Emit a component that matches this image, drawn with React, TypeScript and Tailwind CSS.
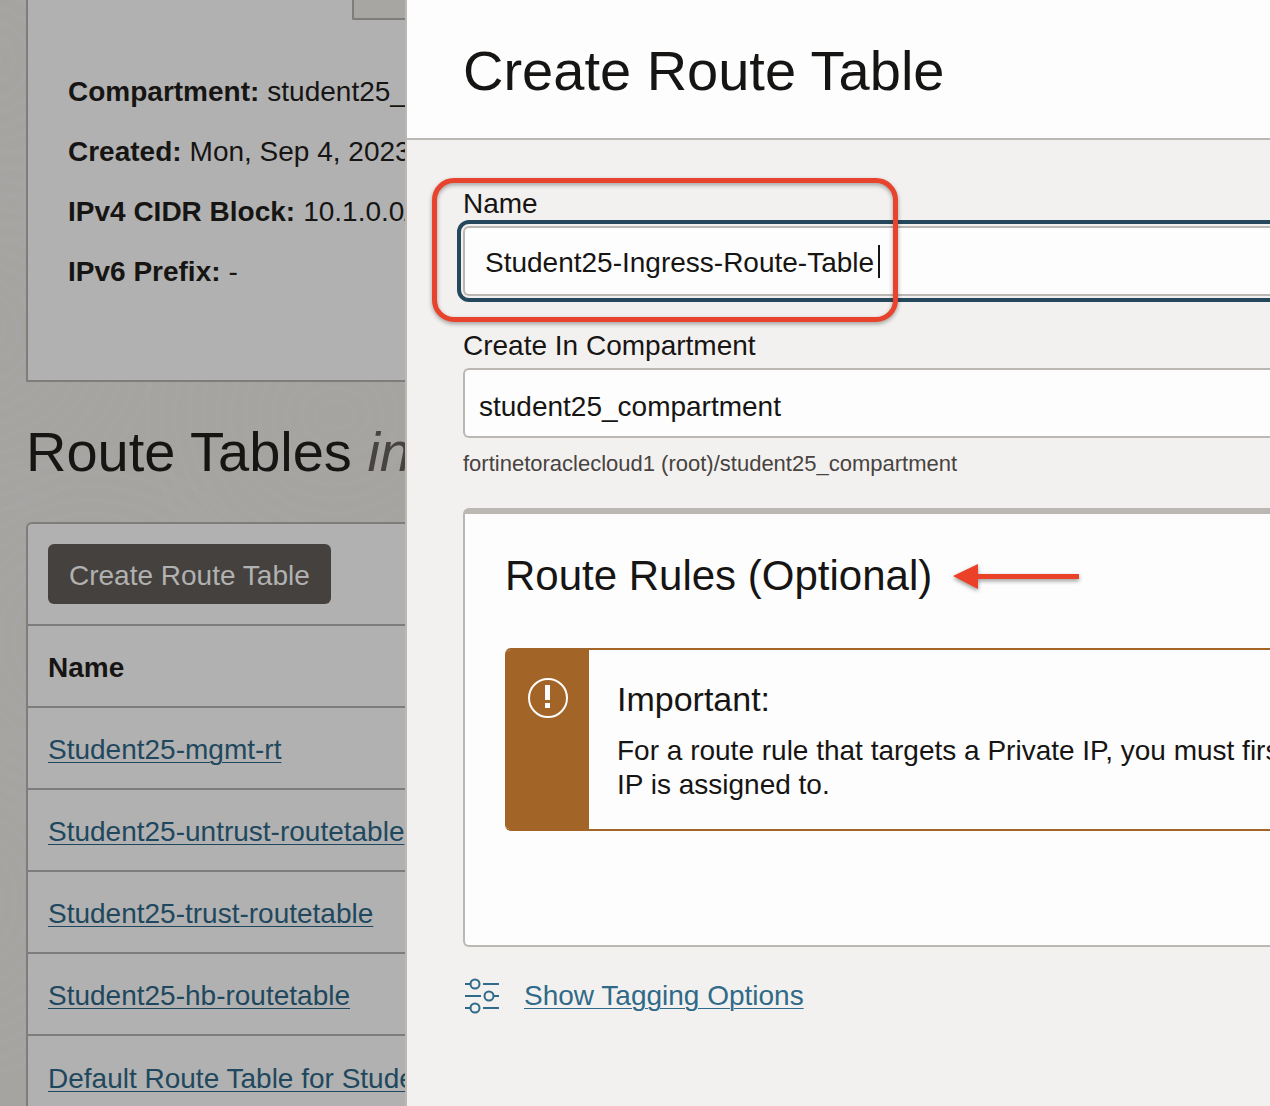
import React, { useState } from "react";

const details = [
  { label: "Compartment:", value: "student25_" },
  { label: "Created:", value: "Mon, Sep 4, 2023" },
  { label: "IPv4 CIDR Block:", value: "10.1.0.0/16" },
  { label: "IPv6 Prefix:", value: "-" },
];

const routeTables = [
  "Student25-mgmt-rt",
  "Student25-untrust-routetable",
  "Student25-trust-routetable",
  "Student25-hb-routetable",
  "Default Route Table for Student",
];

const rippleCenters = [
  [90, 640],
  [335, 415],
  [-20, 60],
  [-30, 330],
  [-60, 900],
  [420, 20],
];

const rippleRadii = [14, 28, 42, 56, 70, 84, 98, 112, 126, 140, 154, 168, 182];

function Ripples() {
  return (
    <svg className="absolute inset-0 h-full w-full" aria-hidden="true" fill="none" stroke="#aaa9a7" strokeWidth="5">
      {rippleCenters.map(([cx, cy]) =>
        rippleRadii.map((r) => <ellipse key={`${cx}-${cy}-${r}`} cx={cx} cy={cy} rx={r + 6} ry={r} opacity="0.35" />)
      )}
    </svg>
  );
}

function SlidersIcon() {
  return (
    <svg className="h-9 w-9 shrink-0" viewBox="0 0 36 36" fill="none" stroke="currentColor" strokeWidth="2" aria-hidden="true">
      <path d="M1 6h5M19 6h16M1 18h16M29 18h6M1 30h5M19 30h16" />
      <circle cx="11" cy="6" r="4.500" />
      <circle cx="25" cy="18" r="4.500" />
      <circle cx="11" cy="30" r="4.500" />
    </svg>
  );
}

function WarningIcon() {
  return (
    <svg className="h-10 w-10" viewBox="0 0 40 40" aria-hidden="true">
      <circle cx="20" cy="20" r="19" fill="none" stroke="#fdfdfd" strokeWidth="2" />
      <path d="M17 7h5v15h-5zM17 25h5v5h-5z" fill="#fdfdfd" />
    </svg>
  );
}

function Arrow() {
  return (
    <svg
      className="h-[26px] w-32 shrink-0 drop-shadow-[0_2px_2px_rgba(0,0,0,0.4)]"
      viewBox="0 0 128 26"
      fill="#eb4128"
      aria-hidden="true"
    >
      <path d="M1 13 26 1v10h101v5H26v10z" />
    </svg>
  );
}

function BackgroundPage() {
  return (
    <main className="relative min-w-0 overflow-hidden bg-[#a5a4a1] pl-[26px]">
      <Ripples />
      <div className="relative">
        <section className="rounded-bl-[2px] border-b-2 border-l-2 border-[#7f7d7b] bg-[#b1b1b1] pb-[78px] pl-10">
          <div className="flex h-[62px] justify-end">
            <div className="h-5 w-[53px] rounded-bl-[2px] border-b-2 border-l-2 border-[#7f7d7b] bg-[#a7a6a3]" />
          </div>
          <dl className="whitespace-nowrap leading-[60px]">
            {details.map((d) => (
              <div key={d.label} className="flex gap-2">
                <dt className="font-bold">{d.label}</dt>
                <dd>{d.value}</dd>
              </div>
            ))}
          </dl>
        </section>

        <h2 className="py-9 text-[56px] leading-[68px] whitespace-nowrap">
          Route Tables <em className="text-[#474340]">in</em>
        </h2>

        <section className="rounded-tl-md border-t-2 border-l-2 border-[#7f7d7b] bg-[#b1b1b1]">
          <div className="p-5">
            <button type="button" className="h-[60px] rounded-md bg-[#45413e] px-[21px] pt-1 whitespace-nowrap text-[#b1b1b1]">
              Create Route Table
            </button>
          </div>
          <table className="w-full table-fixed border-collapse">
            <thead>
              <tr className="h-[82px] border-t-2 border-[#7f7d7b]">
                <th scope="col" className="pt-1 pl-5 text-left font-bold">
                  Name
                </th>
              </tr>
            </thead>
            <tbody>
              {routeTables.map((name) => (
                <tr key={name} className="h-[82px] border-t-2 border-[#7f7d7b]">
                  <td className="pt-1 pl-5 whitespace-nowrap">
                    <a href="#" className="text-[#1f485e] underline decoration-1 underline-offset-3">
                      {name}
                    </a>
                  </td>
                </tr>
              ))}
            </tbody>
          </table>
        </section>
      </div>
    </main>
  );
}

function CreateRouteTableDrawer() {
  const [name, setName] = useState("Student25-Ingress-Route-Table");
  return (
    <aside className="min-w-0 overflow-hidden border-l-2 border-[#bbb7b3] bg-[#f3f1ef]">
      <header className="border-b-2 border-[#bbb7b3] bg-[#fdfdfd] px-14 pt-[38px] pb-[34px]">
        <h1 className="text-[56px] leading-[66px] whitespace-nowrap">Create Route Table</h1>
      </header>

      <form className="pt-12 pl-14">
        <div className="relative">
          <label htmlFor="name" className="block leading-8">
            Name
          </label>
          <div className="mt-1.5 flex h-[70px] items-center rounded-l-md border-2 border-r-0 border-[#bbb7b3] bg-[#fdfdfd] pl-5 outline-4 outline-offset-2 outline-[#26485c]">
            <input
              id="name"
              type="text"
              value={name}
              onChange={(e) => setName(e.target.value)}
              className="field-sizing-content h-full pt-1 pr-1 caret-transparent outline-none"
            />
            <span className="h-[33px] w-0.5 bg-[#161513]" />
          </div>
          <div className="pointer-events-none absolute -top-2.5 -left-[31px] h-36 w-[466px] rounded-[22px] border-5 border-[#e8432c] drop-shadow-[0_2px_2px_rgba(0,0,0,0.35)]" />
        </div>

        <label htmlFor="compartment" className="mt-[34px] block leading-8">
          Create In Compartment
        </label>
        <select
          id="compartment"
          className="mt-1.5 block h-[70px] w-full appearance-none rounded-l-md border-2 border-r-0 border-[#bbb7b3] bg-[#fdfdfd] pt-2 pl-3.5"
        >
          <option>student25_compartment</option>
        </select>
        <p className="mt-3 text-[22px] leading-7 text-[#474340]">fortinetoraclecloud1 (root)/student25_compartment</p>

        <section className="mt-[30px] rounded-l-md border-2 border-t-6 border-r-0 border-[#bbb7b3] bg-[#fdfdfd] pt-9 pb-[114px] pl-10">
          <div className="flex items-center gap-5">
            <h2 className="text-[42px] leading-[52px] whitespace-nowrap">Route Rules (Optional)</h2>
            <Arrow />
          </div>
          <div className="mt-[46px] flex overflow-hidden rounded-l-md border-y-2 border-[#a36527]">
            <div className="flex w-[84px] shrink-0 justify-center bg-[#a36527] pt-7 pl-0.5">
              <WarningIcon />
            </div>
            <div className="pt-7 pb-[27px] pl-7 whitespace-nowrap">
              <h3 className="text-[34px] leading-[42px]">Important:</h3>
              <p className="mt-3.5 leading-[34px]">
                For a route rule that targets a Private IP, you must first
                <br />
                IP is assigned to.
              </p>
            </div>
          </div>
        </section>

        <div className="mt-7 flex items-center gap-6 pl-px text-[#2f6a88]">
          <SlidersIcon />
          <a href="#" className="underline decoration-1 underline-offset-3">
            Show Tagging Options
          </a>
        </div>
      </form>
    </aside>
  );
}

export default function App() {
  return (
    <div className="grid h-screen grid-cols-[405px_1fr] overflow-hidden font-['Liberation_Sans',sans-serif] text-[28px] text-[#161513]">
      <BackgroundPage />
      <CreateRouteTableDrawer />
    </div>
  );
}
